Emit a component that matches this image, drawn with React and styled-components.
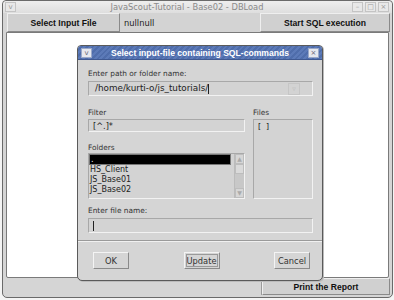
import styled, { createGlobalStyle } from 'styled-components';

const Global = createGlobalStyle`
  html, body { margin: 0; padding: 0; background: #f4f4f4; }
  body { font-family: "DejaVu Sans", sans-serif; width: 394px; height: 300px; overflow: hidden; }
`;

const Window = styled.div`
  position: relative;
  box-sizing: border-box;
  width: 391px;
  height: 298px;
  margin-left: 2px;
  border: 1px solid #6a6a6a;
  border-radius: 4px 4px 5px 5px;
  background: #d5d5d5;
  display: flex;
  flex-direction: column;
`;

const TitleBar = styled.div`
  height: 12px;
  display: flex;
  align-items: center;
  padding: 0 3px 0 2px;
  background: linear-gradient(#eeeeee, #dedede);
  border-radius: 4px 4px 0 0;
`;

const Title = styled.div`
  flex: 1;
  text-align: center;
  font-size: 8.3px;
  color: #8a8a8a;
  padding-left: 6px;
`;

const FrameBtn = styled.div`
  width: 9px;
  height: 8px;
  margin-left: ${p => p.gap || 0}px;
  border: 1px solid #c4c4c4;
  background: #e8e8e8;
  font-size: 7px;
  line-height: 8px;
  text-align: center;
  color: #999;
`;

const Toolbar = styled.div`
  display: grid;
  grid-template-columns: 113px 140px 1fr;
  height: 19px;
  padding: 0 2px 0 4px;
`;

const ToolButton = styled.div`
  display: flex;
  align-items: center;
  justify-content: center;
  border-top: 1px solid #efefef;
  border-left: 1px solid #efefef;
  border-right: 1px solid #8a8a8a;
  border-bottom: 1px solid #8a8a8a;
  background: #d0d0d0;
  font-family: "Liberation Sans", Arial, sans-serif;
  font-weight: bold;
  font-size: 8.6px;
  color: #111;
`;

const ToolField = styled.div`
  display: flex;
  align-items: center;
  padding-left: 4px;
  background: #d3d3d3;
  font-size: 8.3px;
  color: #222;
`;

const Content = styled.div`
  flex: 1;
  margin: 0 3px 0 3px;
  background: #ffffff;
  border: 1px solid #7a7a7a;
  border-radius: 0 0 2px 2px;
`;

const BottomBar = styled.div`
  display: grid;
  grid-template-columns: 255px 1fr;
  height: 17px;
  padding: 0 2px 2px 4px;
`;

const Spacer = styled.div`
  border-right: 1px solid #9a9a9a;
`;

const Dialog = styled.div`
  position: absolute;
  left: 74px;
  top: 44px;
  width: 246px;
  height: 236px;
  box-sizing: border-box;
  border: 1px solid #5a5a5a;
  border-radius: 4px 4px 5px 5px;
  background: #d5d5d5;
  display: flex;
  flex-direction: column;
  box-shadow: 1px 1px 0 #bbb;
`;

const DialogTitle = styled.div`
  height: 13px;
  display: flex;
  align-items: center;
  padding: 0 3px 0 3px;
  background: repeating-linear-gradient(135deg, #5c7ab8 0 2px, #4f6dab 2px 4px);
  border-radius: 3px 3px 0 0;
  border-bottom: 1px solid #3f5890;
`;

const DialogTitleText = styled.div`
  flex: 1;
  text-align: center;
  color: #ffffff;
  font-family: "Liberation Sans", Arial, sans-serif;
  font-weight: bold;
  font-size: 8.6px;
`;

const SmallBtn = styled.div`
  width: 9px;
  height: 8px;
  border: 1px solid #9aa8c8;
  background: #e6e8ee;
  font-size: 7px;
  line-height: 8px;
  text-align: center;
  color: #667;
`;

const Body = styled.div`
  padding: 9px 9px 0 10px;
  display: flex;
  flex-direction: column;
`;

const Label = styled.div`
  font-size: 7.4px;
  color: #333;
  height: 10px;
  line-height: 10px;
  margin-top: ${p => p.top || 0}px;
  align-self: ${p => (p.end ? 'end' : 'auto')};
`;

const Field = styled.div`
  box-sizing: border-box;
  height: ${p => p.h || 15}px;
  margin-top: ${p => (p.mt === undefined ? 2 : p.mt)}px;
  display: flex;
  align-items: center;
  padding: 0 ${p => p.px || 4}px;
  border: 1px solid #a8a8a8;
  border-right-color: #f2f2f2;
  border-bottom-color: #f2f2f2;
  background: #d3d3d3;
  font-size: ${p => p.fs || 8.2}px;
  color: #222;
`;

const PathText = styled.span`
  flex: 1;
`;

const Caret = styled.span`
  display: inline-block;
  width: 1px;
  height: 10px;
  background: #222;
  vertical-align: middle;
`;

const Combo = styled.div`
  width: 10px;
  height: 10px;
  margin-right: 6px;
  border: 1px solid #c6c6c6;
  font-size: 7px;
  color: #bbb;
  line-height: 10px;
  text-align: center;
`;

const Grid = styled.div`
  display: grid;
  grid-template-columns: 157px 60px;
  grid-template-rows: 10px 14px 21px 46px;
  column-gap: 8px;
  margin-top: 12px;
`;

const FilesList = styled.div`
  grid-column: 2;
  grid-row: 2 / 5;
  margin-top: 1px;
  box-sizing: border-box;
  border: 1px solid #a8a8a8;
  border-right-color: #f2f2f2;
  border-bottom-color: #f2f2f2;
  background: #d3d3d3;
  font-size: 7.8px;
  padding: 2px 4px;
  color: #222;
`;

const FolderBox = styled.div`
  box-sizing: border-box;
  display: flex;
  border: 1px solid #a8a8a8;
  border-right-color: #f2f2f2;
  border-bottom-color: #f2f2f2;
  background: #d3d3d3;
`;

const Rows = styled.div`
  flex: 1;
  padding-right: 3px;
`;

const Row = styled.div`
  box-sizing: border-box;
  height: ${p => (p.selected ? 11 : 10)}px;
  line-height: 10px;
  padding-left: 1px;
  font-size: 8px;
  color: ${p => (p.selected ? '#fff' : '#222')};
  background: ${p => (p.selected ? '#000' : 'transparent')};
  border: ${p => (p.selected ? '1px solid #777' : 'none')};
`;

const ScrollBar = styled.div`
  width: 9px;
  display: flex;
  flex-direction: column;
  background: #c8c8c8;
  border-left: 1px solid #bbb;
`;

const Arrow = styled.div`
  height: 8px;
  font-size: 6px;
  line-height: 8px;
  text-align: center;
  color: #aaa;
  border: 1px solid #bdbdbd;
  background: #d6d6d6;
`;

const Thumb = styled.div`
  height: 8px;
  border: 1px solid #bdbdbd;
  background: #dadada;
`;

const Track = styled.div`
  flex: 1;
`;

const Separator = styled.div`
  height: 0;
  margin: 7px -9px 0 -10px;
  border-top: 1px solid #9a9a9a;
  border-bottom: 1px solid #f0f0f0;
`;

const ButtonRow = styled.div`
  display: flex;
  justify-content: space-between;
  padding: 0 3px 0 5px;
  margin-top: 10px;
`;

const DlgButton = styled.div`
  width: 36px;
  height: 17px;
  box-sizing: border-box;
  display: flex;
  align-items: center;
  justify-content: center;
  border: 1px solid #8a8a8a;
  border-top-color: #f4f4f4;
  border-left-color: #f4f4f4;
  outline: ${p => (p.focused ? '1px solid #9a9a9a' : 'none')};
  outline-offset: -3px;
  font-size: 8.3px;
  color: #333;
  background: #d5d5d5;
`;

export default function App() {
  return (
    <>
      <Global />
      <Window>
        <TitleBar>
          <FrameBtn>v</FrameBtn>
          <Title>JavaScout-Tutorial - Base02 - DBLoad</Title>
          <FrameBtn>–</FrameBtn>
          <FrameBtn gap={2}>□</FrameBtn>
          <FrameBtn gap={2}>×</FrameBtn>
        </TitleBar>
        <Toolbar>
          <ToolButton>Select Input File</ToolButton>
          <ToolField>nullnull</ToolField>
          <ToolButton>Start SQL execution</ToolButton>
        </Toolbar>
        <Content />
        <BottomBar>
          <Spacer />
          <ToolButton>Print the Report</ToolButton>
        </BottomBar>

        <Dialog>
          <DialogTitle>
            <SmallBtn>v</SmallBtn>
            <DialogTitleText>Select input-file containing SQL-commands</DialogTitleText>
            <SmallBtn>×</SmallBtn>
          </DialogTitle>
          <Body>
            <Label>Enter path or folder name:</Label>
            <Field h={15} px={6} fs={8.8}>
              <PathText>/home/kurti-o/js_tutorials/<Caret /></PathText>
              <Combo>▿</Combo>
            </Field>
            <Grid>
              <Label>Filter</Label>
              <Label>Files</Label>
              <Field h={13} mt={1}>[^.]*</Field>
              <FilesList>[ &nbsp;]</FilesList>
              <Label end>Folders</Label>
              <FolderBox>
                <Rows>
                  <Row selected>.</Row>
                  <Row>HS_Client</Row>
                  <Row>JS_Base01</Row>
                  <Row>JS_Base02</Row>
                </Rows>
                <ScrollBar>
                  <Arrow>▲</Arrow>
                  <Thumb />
                  <Track />
                  <Arrow>▼</Arrow>
                </ScrollBar>
              </FolderBox>
            </Grid>
            <Label top={7}>Enter file name:</Label>
            <Field h={15}>
              <Caret />
            </Field>
            <Separator />
            <ButtonRow>
              <DlgButton>OK</DlgButton>
              <DlgButton focused>Update</DlgButton>
              <DlgButton>Cancel</DlgButton>
            </ButtonRow>
          </Body>
        </Dialog>
      </Window>
    </>
  );
}
